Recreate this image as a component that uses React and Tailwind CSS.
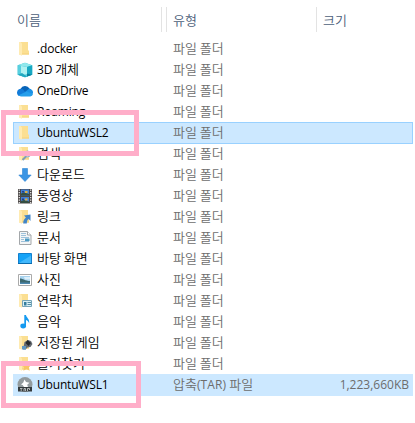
import React from "react";

const Folder = ({ children }) => (
  <svg width="16" height="16" viewBox="0 0 16 16">
    <path d="M2 1h9v8.500h1V13.500H2z" fill="#fbdf92" />
    <path d="M2 1h1.500L5 2.500v12.300L2 13.500z" fill="#ffebb2" />
    <path d="M5 12.500h7v1H5z" fill="#f5d07a" />
    {children}
  </svg>
);

const icons = {
  folder: <Folder />,
  cube: (
    <svg width="16" height="16" viewBox="0 0 16 16">
      <path d="M.7 3.200 8 .8l7.200 2.400v9.600L8 15.200.7 12.800z" fill="#28bdd0" />
      <path d="M.7 3.200 8 .8l7.200 2.400L10 5z" fill="#91e8ec" />
      <path d="M.7 3.200 10 5v9.600l-2 .6-7.300-2.400z" fill="#58cfdf" />
      <path d="M4 4l6 1v7l-6 1.500z" fill="#aff1f1" />
      <path d="M.7 12.800 5 11l5 3.600-2 .6z" fill="#22a9c0" />
      <path d="M10 5l5.200-1.800v9.600L10 14.500z" fill="#18a8c2" />
      <path d="M10 11.500l5.200 1.300L10 14.500z" fill="#087f9e" />
    </svg>
  ),
  cloud: (
    <svg width="16" height="16" viewBox="0 0 16 16">
      <path d="M3.500 6a5 5 0 0 1 9-.4L14 10H2z" fill="#0864b8" />
      <path d="M0 10a4 4 0 0 1 6-3.700L11 13H4a3.500 3.500 0 0 1-4-3z" fill="#127bd8" />
      <path d="M8 9l4-3.200A3.800 3.800 0 0 1 16 10l-1 2z" fill="#1b91e6" />
      <path d="M1.500 12.300 9.500 8.500 15.900 11a2.800 2.800 0 0 1-2.700 2.400H4a4 4 0 0 1-2.500-1.100z" fill="#259feb" />
    </svg>
  ),
  search: (
    <Folder>
      <circle cx="10.500" cy="8" r="3" fill="#c5dfee" stroke="#8eabc2" />
      <path d="M9 10.500 5.500 14" stroke="#7f9fb8" strokeWidth="2" />
    </Folder>
  ),
  download: (
    <svg width="16" height="16" viewBox="0 0 16 16">
      <path d="M5.500 1.500h5V8h3.700L8 14.500 1.800 8h3.700z" fill="#3b95e4" stroke="#2d85d3" strokeWidth=".6" />
    </svg>
  ),
  video: (
    <svg width="16" height="16" viewBox="0 0 16 16">
      <path d="M1 1h14v14.500H1z" fill="#4b4746" />
      <path d="M4 1.500h8V7.500H4zM4 9h8v6H4z" fill="#3f7fd4" />
      <path d="M4 5.500l3-1 5 1.500v1.500H4zM4 13l3-1 5 1.500V15H4z" fill="#344f42" />
      <path d="M8 3h2.500v2H8zM8 10.500h2.500v2H8z" fill="#d9ad48" />
      <path d="M5 3h2v1.500H5zM5 10.500h2V12H5z" fill="#283f85" />
      <path d="M2.300 1.500v14M13.700 1.500v14" stroke="#eee" strokeWidth="1.200" strokeDasharray="1.300 1.200" />
    </svg>
  ),
  link: (
    <Folder>
      <path d="M7 6.500 13.500 5.500v6.500l-1.900-1.900c-1.400 1-1.700 2.200-1.800 4.400H6.200c0-3 .9-4.600 2.700-6.100z" fill="#4286c8" />
    </Folder>
  ),
  document: (
    <svg width="16" height="16" viewBox="0 0 16 16">
      <path d="M2.500 1.500h8L14 5v9.500H2.500z" fill="#f3f5f6" stroke="#a3a7aa" />
      <path d="M10.500 1.500V5H14" fill="#fff" stroke="#a3a7aa" />
      <path d="M4 3.500h5M4 5.500h5M4 7.500h8M4 9.500h3M4 11.500h8" stroke="#86b4d3" strokeWidth=".8" />
      <path d="M8 8.500h4.500V11H8z" fill="#4c9bc3" />
    </svg>
  ),
  desktop: (
    <svg width="16" height="16" viewBox="0 0 16 16">
      <path d="M1.500 2.500h13v10h-13z" fill="#16a3f7" stroke="#1380ce" />
      <path d="M2 12 14 4.500V12H2z" fill="#42b8fc" />
      <path d="M1 12.500h14" stroke="#096caf" />
    </svg>
  ),
  photo: (
    <svg width="16" height="16" viewBox="0 0 16 16">
      <path d="M1.500 2.500h13v11h-13z" fill="#fff" stroke="#aaa" />
      <path d="M3 4h10v8H3z" fill="#a7d3ef" />
      <path d="M3 6.500c3 0 5 2.500 10 2.500v3H3z" fill="#3d6970" />
      <path d="M3 10.500h10V12H3z" fill="#4c87ae" />
      <path d="M7 5h6v2.500H8z" fill="#dceffa" />
    </svg>
  ),
  contact: (
    <Folder>
      <path d="M5.500 7.500h9v6h-9z" fill="#d9f0f7" stroke="#75a4b8" />
      <path d="M7 9h2.500v3.500H7z" fill="#337c9c" />
      <path d="M10.500 9.500H14M10.500 11.500H14" stroke="#528da6" />
    </Folder>
  ),
  music: (
    <svg width="16" height="16" viewBox="0 0 16 16">
      <ellipse cx="6.200" cy="12" rx="2.900" ry="2.400" fill="#159af0" />
      <path d="M7.300 1H9c.3 2.700 3.800 3.500 3.200 8.500-.5-2-1.600-3-3.200-3.500v6H7.300z" fill="#159af0" />
    </svg>
  ),
  game: (
    <Folder>
      <path d="M7.500 7 11 5l3 1 1.500 3-2 3-3 .5-2 2H6z" fill="#656b72" />
      <path d="M10.500 5 14 8l-2.500 3-3-3z" fill="#25292d" />
      <path d="M5 11h4v3.500H5z" fill="#5f98c2" />
    </Folder>
  ),
  favorite: (
    <Folder>
      <path d="M9.500 5.500 11 8.300l3.300.5-2.300 2.400.6 3.500-3.100-1.600-3.100 1.600.6-3.500-2.300-2.400 3.300-.5z" fill="#f8c566" />
    </Folder>
  ),
  archive: (
    <svg width="16" height="16" viewBox="0 0 16 16">
      <circle cx="8" cy="7.500" r="7.500" fill="#939b9e" />
      <path d="M7.500 2.500 9 5l3.500.7-2.300 2.100.8 2.200H7L5.700 8 4 7.500 6.300 5.500z" fill="#fff" />
      <path d="M1 10h14v4.500H1z" fill="#343a3d" />
      <path d="M3 11.500h2.500M4.200 11.500V14M7 14v-2.500h1.500V14M10.500 14v-2.500h2V13" stroke="#d0d3d4" strokeWidth=".8" fill="none" />
    </svg>
  ),
};

const rows = [
  [".docker", "folder"],
  ["3D 개체", "cube"],
  ["OneDrive", "cloud"],
  ["Roaming", "folder"],
  ["UbuntuWSL2", "folder"],
  ["검색", "search"],
  ["다운로드", "download"],
  ["동영상", "video"],
  ["링크", "link"],
  ["문서", "document"],
  ["바탕 화면", "desktop"],
  ["사진", "photo"],
  ["연락처", "contact"],
  ["음악", "music"],
  ["저장된 게임", "game"],
  ["즐겨찾기", "favorite"],
  ["UbuntuWSL1", "archive", "압축(TAR) 파일", "1,223,660KB"],
];

// Hangul runs are set slightly larger than the Latin text beside them.
function Label({ text, latin = "tracking-[-0.18px]" }) {
  return text.split(/([가-힣][가-힣 ]*)/).map((run, i) =>
    i % 2 ? (
      <span key={i} className="font-['Noto_Sans_CJK_KR',sans-serif] text-[13px] leading-none font-[350]">{run}</span>
    ) : (
      <span key={i} className={latin}>{run}</span>
    ),
  );
}

function Row({ row, index }) {
  const [name, icon, type = "파일 폴더", size = ""] = row;
  const state =
    index === 4
      ? "bg-[#cce8ff] outline outline-1 -outline-offset-1 outline-[#99d1ff]"
      : index === 16
        ? "bg-[#cce8ff]"
        : "";
  return (
    <div className="h-[21px]">
      <div className={`ml-[13px] flex h-[22px] w-[400px] items-center ${state}`}>
        <div className="flex w-[160px] items-center pl-1 text-black">
          <span className="mr-1 size-4 shrink-0">{icons[icon]}</span>
          <span className="h-5 whitespace-pre"><Label text={name} /></span>
        </div>
        <span className="h-5 w-[150px] whitespace-pre text-[#6d6d6d]"><Label text={type} latin="tracking-[0.1px]" /></span>
        <span className="flex-1 pr-1 text-right text-[#6d6d6d]">{size}</span>
      </div>
    </div>
  );
}

export default function App() {
  return (
    <main className="relative h-[423px] w-[415px] overflow-hidden bg-white font-['Open_Sans','Noto_Sans_CJK_KR',sans-serif] text-[12px] leading-[20px] whitespace-nowrap">
      <header className="flex h-[38px] items-start pt-[7px] text-[#4c607a]">
        <div className="flex h-[25px] w-[162px] items-center border-r border-[#e3e3e3] pl-[17px]"><Label text="이름" /></div>
        <div className="h-[25px] w-[5px] border-r border-[#e3e3e3]" />
        <div className="flex h-[25px] w-[150px] items-center border-r border-[#e3e3e3] pl-[6px]"><Label text="유형" /></div>
        <div className="flex h-[25px] items-center pl-[6px]"><Label text="크기" /></div>
      </header>
      {rows.map((row, index) => (
        <Row key={row[0]} row={row} index={index} />
      ))}
      <div className="absolute top-[110px] left-[1px] h-[46px] w-[138px] border-5 border-[#ffaec9]" />
      <div className="absolute top-[361px] left-[1px] h-[47px] w-[140px] border-5 border-[#ffaec9]" />
    </main>
  );
}
